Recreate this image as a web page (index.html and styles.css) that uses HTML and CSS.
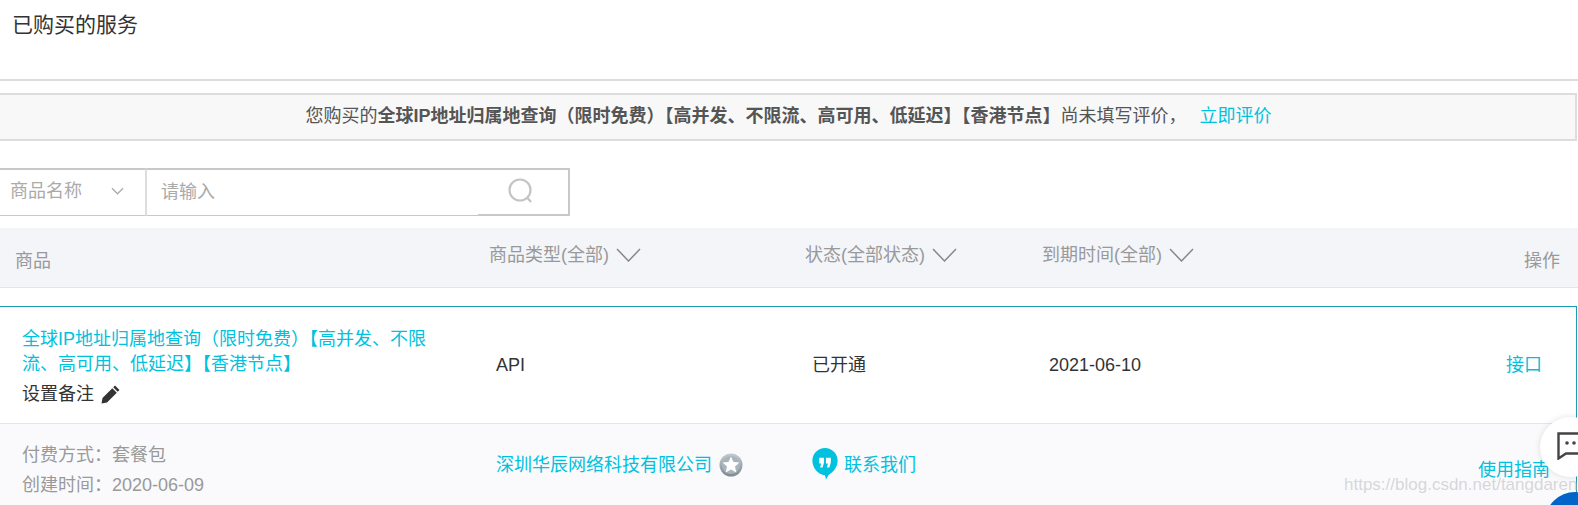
FILE: index.html
```html
<!DOCTYPE html>
<html lang="zh-CN">
<head>
<meta charset="utf-8">
<title>已购买的服务</title>
<link rel="stylesheet" href="styles.css">
</head>
<body>
<div class="page">
  <h1 class="title">已购买的服务</h1>
  <div class="notice">
    您购买的<b>全球IP地址归属地查询（限时免费）【高并发、不限流、高可用、低延迟】【香港节点】</b>尚未填写评价， <a class="link notice-link">立即评价</a>
  </div>
  <div class="search">
    <div class="search-select">
      <span>商品名称</span>
      <svg class="select-arrow" viewBox="0 0 14 8"><path d="M1 1l6 6 6-6"/></svg>
    </div>
    <div class="search-input">请输入</div>
    <div class="search-btn">
      <svg class="search-icon" viewBox="0 0 26 26"><circle cx="12" cy="12" r="10.5"/><path d="M19.5 20l3.5 4"/></svg>
    </div>
  </div>
  <div class="grid thead">
    <div class="th th-name">商品</div>
    <div class="th">商品类型(全部)<svg class="th-arrow" viewBox="0 0 25 14"><path d="M1 1l11.500 12L24 1"/></svg></div>
    <div class="th">状态(全部状态)<svg class="th-arrow" viewBox="0 0 25 14"><path d="M1 1l11.500 12L24 1"/></svg></div>
    <div class="th">到期时间(全部)<svg class="th-arrow" viewBox="0 0 25 14"><path d="M1 1l11.500 12L24 1"/></svg></div>
    <div class="th th-op">操作</div>
  </div>
  <div class="item">
    <div class="grid item-main">
      <div class="cell-name">
        <a class="link name-link">全球IP地址归属地查询（限时免费）【高并发、不限流、高可用、低延迟】【香港节点】</a>
        <div class="remark">设置备注
          <svg class="pencil" viewBox="0 0 20 20"><path d="M14 1.500l4.500 4.500-1.800 1.800-4.500-4.500zM11.300 4.200l4.500 4.500L6 18.500 0.500 19.500 1.500 14z"/></svg>
        </div>
      </div>
      <div>API</div>
      <div>已开通</div>
      <div>2021-06-10</div>
      <div class="op"><a class="link">接口</a></div>
    </div>
    <div class="grid item-foot">
      <div class="meta">
        <div>付费方式：套餐包</div>
        <div>创建时间：2020-06-09</div>
      </div>
      <div class="vendor">
        <a class="link">深圳华辰网络科技有限公司</a>
        <svg class="star" viewBox="0 0 24 24">
          <defs><linearGradient id="starBg" x1="0" y1="0" x2="0" y2="1"><stop offset="0" stop-color="#c3cbd1"/><stop offset="1" stop-color="#7d8a93"/></linearGradient></defs>
          <circle cx="12" cy="12" r="11.500" fill="url(#starBg)"/>
          <circle cx="12" cy="12" r="9" fill="#a9b4bb"/>
          <path fill="#fff" d="M12 3.500l2.500 5.500 6 .6-4.500 4 1.300 5.900L12 16.500 6.700 19.500 8 13.600l-4.500-4 6-.6z"/>
        </svg>
      </div>
      <div class="contact">
        <svg class="bubble" viewBox="0 0 26 34">
          <path fill="#00c1de" d="M13 0c7.200 0 13 5.800 13 13 0 7-4.500 12-9.500 15l-2.500 4.500-1-4.500C5.800 28 0 20.200 0 13 0 5.800 5.800 0 13 0z"/>
          <path fill="#fff" d="M7 10h5v5l-1.500 5H8l1-4H7zM14 10h5v5l-1.500 5H15l1-4h-2z"/>
        </svg>
        <a class="link">联系我们</a>
      </div>
      <div></div>
      <div class="op guide"><a class="link">使用指南</a></div>
    </div>
  </div>
  <div class="watermark">https://blog.csdn.net/tangdaren2</div>
  <div class="chat">
    <svg class="chat-icon" viewBox="0 0 36 28"><path d="M1.500 1.500h33v20H9l-7.500 5z"/><circle cx="10" cy="11" r="1.800"/><circle cx="17" cy="11" r="1.800"/><circle cx="24" cy="11" r="1.800"/></svg>
  </div>
  <div class="help"></div>
</div>
</body>
</html>
```
FILE: styles.css
```css
* { box-sizing: border-box; }
html, body { margin: 0; height: 100%; overflow: hidden; }
body {
  background: #fff;
  color: #333;
  font: 18px/26px "Liberation Sans", "Noto Sans CJK SC", sans-serif;
}
.page { position: relative; width: 1578px; height: 505px; overflow: hidden; }
.link { color: #00c1de; text-decoration: none; }

.title {
  margin: 0;
  height: 81px;
  padding: 10px 0 0 12px;
  font-size: 21px;
  font-weight: 400;
  line-height: 30px;
  border-bottom: 2px solid #ddd;
}
.notice {
  margin: 12px 0 0 -4px;
  width: 1581px;
  height: 48px;
  border: 2px solid #ddd;
  background: #f8f8f8;
  color: #555;
  text-align: center;
  line-height: 43px;
  padding-left: 4px;
  white-space: nowrap;
}
.notice b { font-weight: 700; }
.notice-link { margin-left: 8px; }

.search {
  display: flex;
  width: 574px;
  height: 48px;
  margin: 27px 0 0 -4px;
  color: #aaa;
}
.search-select {
  display: flex;
  align-items: center;
  width: 151px;
  padding: 0 0 3px 14px;
  border-top: 2px solid #c8c8c8;
  border-bottom: 1px solid #c8c8c8;
  border-right: 2px solid #ddd;
}
.select-arrow { width: 13px; height: 8px; margin-left: 29px; fill: none; stroke: #aaa; stroke-width: 1.300; }
.search-input {
  flex: 1;
  padding-left: 14px;
  line-height: 45px;
  border-top: 2px solid #c8c8c8;
  border-bottom: 1px solid #c8c8c8;
}
.search-btn {
  display: flex;
  align-items: center;
  width: 92px;
  padding: 0 0 2px 30px;
  border: solid #c8c8c8;
  border-width: 2px 2px 2px 0;
}
.search-icon { width: 26px; height: 26px; fill: none; stroke: #c4c4c4; stroke-width: 2.200; }

.grid { display: grid; grid-template-columns: 474px 316px 237px 1fr 100px; }
.thead {
  height: 60px;
  margin-top: 12px;
  padding: 0 18px 0 15px;
  background: #f3f5f9;
  border-bottom: 1px solid #e3e5ea;
  color: #999;
}
.th { display: flex; align-items: center; padding-bottom: 5px; white-space: nowrap; }
.th-name, .th-op { padding-bottom: 0; padding-top: 6px; }
.th-op { justify-content: flex-end; }
.th-arrow { width: 25px; height: 14px; margin-left: 7px; fill: none; stroke: #888; stroke-width: 1.500; }

.item {
  margin: 18px 1px 0 -2px;
  border: 1px solid #1a9cb5;
  border-bottom: 0;
  padding-bottom: 0;
  height: 210px;
}
.item-main {
  height: 117px;
  padding: 0 34px 0 23px;
  align-items: center;
  border-bottom: 1px solid #e3e5ea;
}
.cell-name { width: 420px; line-height: 25px; padding-top: 3px; }
.remark { display: flex; align-items: center; gap: 7px; margin-top: 5px; }
.pencil { width: 20px; height: 20px; fill: #333; }
.op { text-align: right; }
.item-foot {
  height: 93px;
  padding: 16px 26px 0 23px;
  background: #fafafc;
  align-items: start;
}
.meta { color: #999; line-height: 30px; }
.vendor, .contact { display: flex; align-items: center; white-space: nowrap; }
.vendor { gap: 7px; padding-top: 12px; }
.star { width: 24px; height: 24px; }
.contact { gap: 6px; padding-top: 8px; }
.bubble { width: 26px; height: 33px; }
.guide { padding-top: 17px; }

.watermark {
  position: absolute;
  left: 1344px;
  top: 473px;
  color: rgba(190, 190, 190, .6);
  font-size: 17px;
  line-height: 24px;
  white-space: nowrap;
}
.chat {
  position: absolute;
  left: 1540px;
  top: 417px;
  width: 62px;
  height: 60px;
  border-radius: 50%;
  background: #fff;
  box-shadow: 0 0 6px rgba(0, 0, 0, .12);
}
.chat-icon { position: absolute; left: 17px; top: 15px; width: 36px; height: 28px; fill: none; stroke: #444; stroke-width: 2.400; }
.chat-icon circle { fill: #444; stroke: none; }
.help {
  position: absolute;
  left: 1545px;
  top: 492px;
  width: 60px;
  height: 60px;
  border-radius: 50%;
  background: #0064c8;
}
```
